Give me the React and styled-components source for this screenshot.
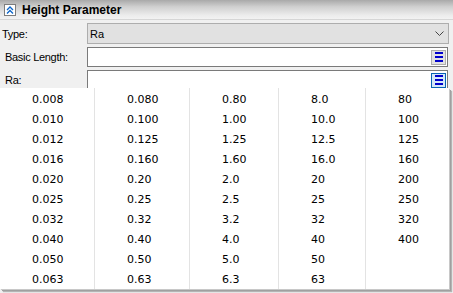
import React from "react";
import styled, { createGlobalStyle } from "styled-components";

const Global = createGlobalStyle`
  html, body { margin: 0; padding: 0; }
  body {
    width: 453px; height: 293px; overflow: hidden;
    background: #f0f0f0;
    font-family: "Liberation Sans", Arial, sans-serif;
  }
`;

const Panel = styled.div`
  position: relative;
  width: 453px;
  height: 293px;
  background: #f0f0f0;
  overflow: hidden;
`;

const Header = styled.div`
  height: 19px;
  display: flex;
  align-items: center;
  gap: 6px;
  padding-left: 4px;
  background: linear-gradient(to bottom, #a9a9a9 0%, #cfcfcf 35%, #ececec 80%, #f2f2f2 100%);
  border-bottom: 1px solid #d6d6d6;
`;

const CollapseBox = styled.div`
  width: 10px;
  height: 10px;
  border: 1px solid #7d7d7d;
  background: #fff;
  display: flex;
  align-items: center;
  justify-content: center;
`;

const Title = styled.div`
  font-family: "Liberation Sans", Arial, sans-serif;
  font-weight: bold;
  font-size: 12px;
  color: #000;
`;

const Form = styled.div`
  display: grid;
  grid-template-columns: 87px 1fr;
  row-gap: 3px;
  padding: 3px 4px 0 0;
`;

const Label = styled.div`
  font-size: 11px;
  letter-spacing: -0.3px;
  color: #000;
  display: flex;
  align-items: center;
  padding-left: ${(p) => p.$indent}px;
`;

const Combo = styled.div`
  height: 19px;
  border: 1px solid #adadad;
  background: #e1e1e1;
  display: flex;
  align-items: center;
  justify-content: space-between;
  padding: 0 4px 0 2px;
  font-size: 11px;
  color: #000;
`;

const Input = styled.div`
  height: 18px;
  margin-right: 1px;
  border: 1px solid #7a7a7a;
  background: #fff;
  display: flex;
  align-items: center;
  justify-content: flex-end;
  padding-right: 1px;
`;

const MenuButton = styled.div`
  width: 13px;
  height: 13px;
  border: 1px solid ${(p) => (p.$hot ? "#0a64b4" : "#adadad")};
  background: ${(p) => (p.$hot ? "#d4e8f8" : "#e1e1e1")};
  display: flex;
  flex-direction: column;
  align-items: center;
  justify-content: center;
  gap: 2px;
`;

const Bar = styled.div`
  width: 8px;
  height: 2px;
  background: #0000cc;
`;

const Popup = styled.div`
  position: absolute;
  top: 88px;
  left: 0;
  width: 449px;
  height: 201px;
  background: #fff;
  box-shadow: 1px 1px 0 #c8c8c8, 2px 2px 0 #a0a0a0, 3px 3px 1px rgba(0,0,0,0.25);
  display: grid;
  grid-template-columns: 94px 95px 89px 87px 1fr;
`;

const Column = styled.div`
  border-left: ${(p) => (p.$first ? "none" : "1px solid #e3e3e3")};
  padding-top: 1px;
  padding-left: 32px;
`;

const Cell = styled.div`
  height: 20px;
  display: flex;
  align-items: center;
  font-family: "DejaVu Sans", Verdana, sans-serif;
  font-size: 11px;
  color: #000;
`;

const cols = [
  ["0.008", "0.010", "0.012", "0.016", "0.020", "0.025", "0.032", "0.040", "0.050", "0.063"],
  ["0.080", "0.100", "0.125", "0.160", "0.20", "0.25", "0.32", "0.40", "0.50", "0.63"],
  ["0.80", "1.00", "1.25", "1.60", "2.0", "2.5", "3.2", "4.0", "5.0", "6.3"],
  ["8.0", "10.0", "12.5", "16.0", "20", "25", "32", "40", "50", "63"],
  ["80", "100", "125", "160", "200", "250", "320", "400"],
];

const MenuIcon = () => (
  <>
    <Bar />
    <Bar />
    <Bar />
  </>
);

export default function App() {
  return (
    <>
      <Global />
      <Panel>
        <Header>
          <CollapseBox>
            <svg width="8" height="8" viewBox="0 0 8 8">
              <path d="M1 4 L4 1 L7 4 M1 7.5 L4 4.5 L7 7.5" fill="none" stroke="#0a64c8" strokeWidth="1.3" />
            </svg>
          </CollapseBox>
          <Title>Height Parameter</Title>
        </Header>
        <Form>
          <Label $indent={2}>Type:</Label>
          <Combo>
            <span>Ra</span>
            <svg width="9" height="5" viewBox="0 0 9 5">
              <path d="M0.5 0.5 L4.5 4.5 L8.5 0.5" fill="none" stroke="#444" strokeWidth="1" />
            </svg>
          </Combo>
          <Label $indent={5}>Basic Length:</Label>
          <Input>
            <MenuButton>
              <MenuIcon />
            </MenuButton>
          </Input>
          <Label $indent={5}>Ra:</Label>
          <Input>
            <MenuButton $hot>
              <MenuIcon />
            </MenuButton>
          </Input>
        </Form>
        <Popup>
          {cols.map((c, i) => (
            <Column key={i} $first={i === 0}>
              {c.map((v) => (
                <Cell key={v}>{v}</Cell>
              ))}
            </Column>
          ))}
        </Popup>
      </Panel>
    </>
  );
}
